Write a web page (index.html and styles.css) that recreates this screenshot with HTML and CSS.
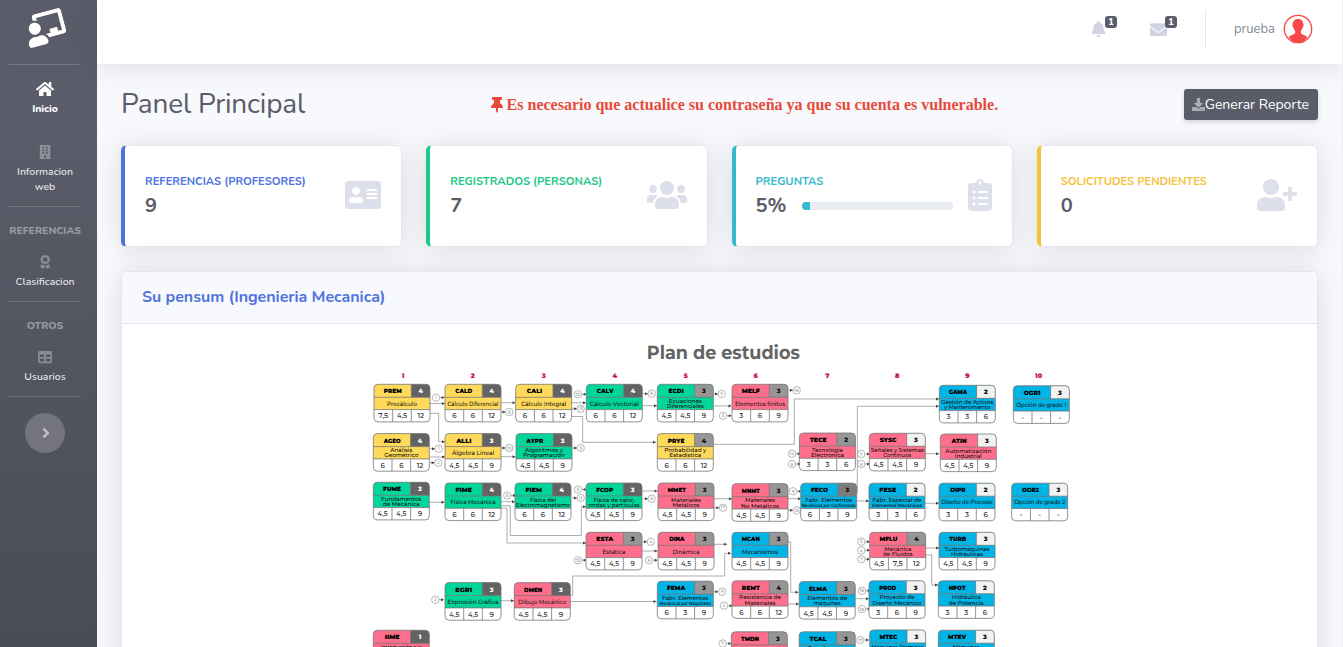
FILE: index.html
```html
<!DOCTYPE html>
<html lang="es">
<head>
<meta charset="utf-8">
<title>Panel Principal</title>
<link rel="stylesheet" href="styles.css">
</head>
<body>
<div class="wrapper">
  <nav class="sidebar">
    <a class="brand">
      <svg class="brand-icon" viewBox="0 0 640 512"><path d="M208 352c-2.39 0-4.78.35-7.06 1.09C187.98 357.3 174.35 360 160 360c-14.35 0-27.98-2.7-40.95-6.91-2.28-.74-4.66-1.09-7.05-1.09C49.94 352-.33 402.48 0 464.62.14 490.88 21.73 512 48 512h224c26.27 0 47.86-21.12 48-47.38.33-62.14-49.94-112.62-112-112.62zm-48-32c53.02 0 96-42.98 96-96s-42.98-96-96-96-96 42.98-96 96 42.98 96 96 96zM592 0H208c-26.47 0-48 22.25-48 49.59V96c23.42 0 45.1 6.78 64 17.8V64h352v288h-64v-64H384v64h-76.24c19.1 16.69 33.12 38.73 39.69 64H592c26.47 0 48-22.25 48-49.59V49.59C640 22.25 618.47 0 592 0z"/></svg>
    </a>
    <hr class="divider">
    <a class="nav-link active">
      <svg class="nav-icon" viewBox="0 0 576 512"><path d="M280.37 148.26L96 300.11V464a16 16 0 0 0 16 16l112.06-.29a16 16 0 0 0 15.92-16V368a16 16 0 0 1 16-16h64a16 16 0 0 1 16 16v95.64a16 16 0 0 0 16 16.05L464 480a16 16 0 0 0 16-16V300L295.67 148.26a12.19 12.19 0 0 0-15.3 0zM571.6 251.47L488 182.56V44.05a12 12 0 0 0-12-12h-56a12 12 0 0 0-12 12v72.61L318.47 43a48 48 0 0 0-61 0L4.34 251.47a12 12 0 0 0-1.6 16.9l25.5 31A12 12 0 0 0 45.15 301l235.22-193.74a12.19 12.19 0 0 1 15.3 0L530.9 301a12 12 0 0 0 16.9-1.6l25.5-31a12 12 0 0 0-1.7-16.93z"/></svg>
      <span>Inicio</span>
    </a>
    <a class="nav-link">
      <svg class="nav-icon" viewBox="0 0 448 512"><path fill-rule="evenodd" d="M436 480h-20V24c0-13-11-24-24-24H56C43 0 32 11 32 24v456H12c-7 0-12 5-12 12v20h448v-20c0-7-5-12-12-12zM128 64h64v64h-64zM256 64h64v64h-64zM128 160h64v64h-64zM256 160h64v64h-64zM128 256h64v64h-64zM256 256h64v64h-64zM192 384h64v96h-64z"/></svg>
      <span>Informacion<br>web</span>
    </a>
    <hr class="divider">
    <div class="heading">REFERENCIAS</div>
    <a class="nav-link grouped">
      <svg class="nav-icon" viewBox="0 0 384 512"><path fill-rule="evenodd" d="M192 0l42 20 46-2 26 38 42 22 2 47 24 41-22 42-2 47-41 24-26 39-47-3-44 22-42-22-47 2-26-38-41-23-2-47-23-43 24-41 1-47 42-22 26-38 46 2zM192 80a88 88 0 1 0 0 176a88 88 0 1 0 0-176z"/><path d="M67 325l28 39 50-2 47 24-45 116c-4 11-16 13-24 5l-41-44-60 3c-11 0-19-10-15-21zM317 325l-28 39-50-2-33 17 36 123c4 11 16 13 24 5l36-44 60 3c11 0 19-10 15-21z"/></svg>
      <span>Clasificacion</span>
    </a>
    <hr class="divider">
    <div class="heading">OTROS</div>
    <a class="nav-link grouped">
      <svg class="nav-icon" viewBox="0 0 512 512"><path d="M464 32H48C21.49 32 0 53.49 0 80v352c0 26.51 21.49 48 48 48h416c26.51 0 48-21.49 48-48V80c0-26.51-21.49-48-48-48zM224 416H64v-96h160v96zm0-160H64v-96h160v96zm224 160H288v-96h160v96zm0-160H288v-96h160v96z"/></svg>
      <span>Usuarios</span>
    </a>
    <hr class="divider">
    <button class="toggle"><svg viewBox="0 0 256 512"><path d="M224.3 273l-136 136c-9.4 9.4-24.6 9.4-33.9 0l-22.6-22.6c-9.4-9.4-9.4-24.6 0-33.9l96.4-96.4-96.4-96.4c-9.4-9.4-9.4-24.6 0-33.9L54.3 103c9.4-9.4 24.6-9.4 33.9 0l136 136c9.5 9.4 9.5 24.6.1 34z"/></svg></button>
  </nav>

  <div class="content">
    <header class="topbar">
      <a class="alert-link">
        <svg class="bell" viewBox="0 0 448 512"><path d="M224 512c35.32 0 63.97-28.65 63.97-64H160.03c0 35.35 28.65 64 63.97 64zm215.39-149.71c-19.32-20.76-55.47-51.99-55.47-154.29 0-77.7-54.48-139.9-127.94-155.16V32c0-17.67-14.32-32-31.98-32s-31.98 14.33-31.98 32v20.84C118.56 68.1 64.08 130.3 64.08 208c0 102.3-36.15 133.53-55.47 154.29-6 6.45-8.66 14.16-8.61 21.71.11 16.4 12.98 32 32.1 32h383.8c19.12 0 32-15.6 32.1-32 .05-7.55-2.61-15.27-8.61-21.71z"/></svg>
        <span class="badge">1</span>
      </a>
      <a class="alert-link">
        <svg class="envelope" viewBox="0 0 512 512"><path d="M502.3 190.8c3.9-3.1 9.7-.2 9.7 4.7V400c0 26.5-21.5 48-48 48H48c-26.5 0-48-21.5-48-48V195.6c0-5 5.7-7.8 9.7-4.7 22.4 17.4 52.1 39.5 154.1 113.6 21.1 15.4 56.7 47.8 92.2 47.6 35.7.3 72-32.8 92.3-47.6 102-74.1 131.6-96.3 154-113.7zM256 320c23.2.4 56.6-29.2 73.4-41.4 132.7-96.3 142.8-104.7 173.4-128.7 5.8-4.5 9.2-11.5 9.2-18.9v-19c0-26.5-21.5-48-48-48H48c-26.5 0-48 21.5-48 48v19c0 7.4 3.4 14.3 9.2 18.9 30.6 23.9 40.7 32.4 173.4 128.7 16.8 12.2 50.2 41.8 73.4 41.4z"/></svg>
        <span class="badge">1</span>
      </a>
      <span class="topbar-divider"></span>
      <span class="user">prueba</span>
      <svg class="avatar" viewBox="0 0 30 30"><circle cx="15" cy="15" r="13.7"/><path d="M15 5c3.6 0 5.3 2.2 5.2 5.3.7.2.5 2.4-.6 3.2-.4 1.7-1 2.5-1.700 3.200v2.500c1.500 1.500 4.700 1.800 6.600 4C22 26.500 19 28.500 15 28.500S8 26.500 5.500 23.200c1.900-2.200 5.100-2.500 6.600-4v-2.500c-.7-.7-1.300-1.500-1.700-3.200-1.100-.8-1.300-3-.6-3.200C9.700 7.200 11.400 5 15 5z"/></svg>
    </header>

    <main class="container">
      <div class="page-head">
        <h1>Panel Principal</h1>
        <div class="warning">
          <svg viewBox="0 0 384 512"><path d="M298.028 214.267L285.793 96H328c13.255 0 24-10.745 24-24V24c0-13.255-10.745-24-24-24H56C42.745 0 32 10.745 32 24v48c0 13.255 10.745 24 24 24h42.207L85.972 214.267C37.465 236.82 0 277.261 0 328c0 13.255 10.745 24 24 24h136v104.007c0 1.242.289 2.467.845 3.578l24 48c2.941 5.882 11.364 5.893 14.311 0l24-48a8.008 8.008 0 0 0 .845-3.578V352h136c13.255 0 24-10.745 24-24-.001-51.183-37.983-91.42-85.973-113.733z"/></svg>
          <span>Es necesario que actualice su contraseña ya que su cuenta es vulnerable.</span>
        </div>
        <button class="report"><svg viewBox="0 0 512 512"><path d="M216 0h80c13.3 0 24 10.7 24 24v168h87.7c17.8 0 26.7 21.5 14.1 34.1L269.7 378.3c-7.5 7.5-19.8 7.5-27.3 0L90.1 226.1c-12.6-12.6-3.7-34.1 14.1-34.1H192V24c0-13.3 10.7-24 24-24zm296 376v112c0 13.3-10.7 24-24 24H24c-13.3 0-24-10.7-24-24V376c0-13.3 10.7-24 24-24h146.7l49 49c20.1 20.1 52.5 20.1 72.6 0l49-49H488c13.3 0 24 10.7 24 24zm-124 88c0-11-9-20-20-20s-20 9-20 20 9 20 20 20 20-9 20-20zm64 0c0-11-9-20-20-20s-20 9-20 20 9 20 20 20 20-9 20-20z"/></svg><span>Generar Reporte</span></button>
      </div>

      <section class="stats">
        <article class="stat primary">
          <div class="stat-text"><div class="label">REFERENCIAS (PROFESORES)</div><div class="value">9</div></div>
          <svg viewBox="0 0 576 512"><path fill-rule="evenodd" d="M528 32H48C21.5 32 0 53.5 0 80v352c0 26.5 21.5 48 48 48h480c26.5 0 48-21.5 48-48V80c0-26.5-21.5-48-48-48zm-352 96c35.3 0 64 28.7 64 64s-28.7 64-64 64-64-28.7-64-64 28.7-64 64-64zm112 236.8c0 10.6-10 19.2-22.4 19.2H86.4C74 384 64 375.4 64 364.8v-19.2c0-31.8 30.1-57.6 67.2-57.6h5c12.3 5.1 25.7 8 39.8 8s27.6-2.9 39.8-8h5c37.1 0 67.2 25.8 67.2 57.6zM352 160h160v32H352zM352 224h160v32H352zM352 288h160v32H352z"/></svg>
        </article>
        <article class="stat success">
          <div class="stat-text"><div class="label">REGISTRADOS (PERSONAS)</div><div class="value">7</div></div>
          <svg viewBox="0 0 640 512"><path d="M96 224c35.3 0 64-28.7 64-64s-28.7-64-64-64-64 28.7-64 64 28.7 64 64 64zm448 0c35.3 0 64-28.7 64-64s-28.7-64-64-64-64 28.7-64 64 28.7 64 64 64zm32 32h-64c-17.6 0-33.5 7.1-45.1 18.6 40.3 22.1 68.9 62 75.1 109.4h66c17.7 0 32-14.3 32-32v-32c0-35.3-28.7-64-64-64zm-256 0c61.9 0 112-50.1 112-112S381.9 32 320 32 208 82.1 208 144s50.1 112 112 112zm76.8 32h-8.3c-20.8 10-43.9 16-68.5 16s-47.6-6-68.5-16h-8.3C179.6 288 128 339.6 128 403.2V432c0 26.5 21.5 48 48 48h288c26.5 0 48-21.5 48-48v-28.8c0-63.6-51.6-115.2-115.2-115.2zm-223.7-13.4C161.5 263.1 145.6 256 128 256H64c-35.3 0-64 28.7-64 64v32c0 17.7 14.3 32 32 32h65.9c6.3-47.4 34.9-87.3 75.2-109.4z"/></svg>
        </article>
        <article class="stat info">
          <div class="stat-text"><div class="label">PREGUNTAS</div><div class="value-row"><div class="value">5%</div><div class="progress"><div class="bar" style="width:5%"></div></div></div></div>
          <svg viewBox="0 0 384 512"><path d="M336 64h-80c0-35.3-28.7-64-64-64s-64 28.7-64 64H48C21.5 64 0 85.5 0 112v352c0 26.5 21.5 48 48 48h288c26.5 0 48-21.5 48-48V112c0-26.5-21.5-48-48-48zM96 424c-13.3 0-24-10.7-24-24s10.7-24 24-24 24 10.7 24 24-10.7 24-24 24zm0-96c-13.3 0-24-10.7-24-24s10.7-24 24-24 24 10.7 24 24-10.7 24-24 24zm0-96c-13.3 0-24-10.7-24-24s10.7-24 24-24 24 10.7 24 24-10.7 24-24 24zm96-192c13.3 0 24 10.7 24 24s-10.7 24-24 24-24-10.7-24-24 10.7-24 24-24zm128 368c0 4.4-3.6 8-8 8H168c-4.4 0-8-3.6-8-8v-16c0-4.4 3.6-8 8-8h144c4.4 0 8 3.6 8 8v16zm0-96c0 4.4-3.6 8-8 8H168c-4.4 0-8-3.6-8-8v-16c0-4.4 3.6-8 8-8h144c4.4 0 8 3.6 8 8v16zm0-96c0 4.4-3.6 8-8 8H168c-4.4 0-8-3.6-8-8v-16c0-4.4 3.6-8 8-8h144c4.4 0 8 3.6 8 8v16z"/></svg>
        </article>
        <article class="stat pending">
          <div class="stat-text"><div class="label">SOLICITUDES PENDIENTES</div><div class="value">0</div></div>
          <svg viewBox="0 0 640 512"><path d="M624 208h-64v-64c0-8.8-7.2-16-16-16h-32c-8.8 0-16 7.2-16 16v64h-64c-8.8 0-16 7.2-16 16v32c0 8.8 7.2 16 16 16h64v64c0 8.8 7.2 16 16 16h32c8.8 0 16-7.2 16-16v-64h64c8.8 0 16-7.2 16-16v-32c0-8.8-7.2-16-16-16zm-400 48c70.7 0 128-57.3 128-128S294.7 0 224 0 96 57.3 96 128s57.3 128 128 128zm89.6 32h-16.7c-22.2 10.2-46.9 16-72.9 16s-50.6-5.8-72.9-16h-16.7C60.2 288 0 348.2 0 422.4V464c0 26.5 21.5 48 48 48h352c26.5 0 48-21.5 48-48v-41.6c0-74.2-60.2-134.4-134.4-134.4z"/></svg>
        </article>
      </section>

      <section class="pensum">
        <h2><span>Su pensum (Ingenieria Mecanica)</span></h2>
        <div class="pensum-body"><svg id="plan" viewBox="365 340 710 330" width="710" height="330"></svg></div>
      </section>
    </main>
  </div>
</div>
<script src="plan.js"></script>
</body>
</html>
```
FILE: styles.css
```css
* { box-sizing: border-box; }
body { margin: 0; background: #f8f9fc; color: #5a5c69; font-family: Nunito, Lato, sans-serif; font-size: 16px; }
svg { fill: currentColor; flex: none; }
button { font: inherit; border: 0; }
.wrapper { display: flex; height: 647px; overflow: hidden; border-right: 1px solid #eeeff3; }

.sidebar { width: 97px; height: 1250px; flex: none; padding-right: 7px; display: flex; flex-direction: column; background: linear-gradient(180deg, #5a5c69 10%, #373840 100%); color: rgba(255,255,255,.85); }
.brand { height: 64px; flex: none; display: flex; align-items: center; justify-content: center; color: #fff; padding: 0 0 8px 2px; }
.brand-icon { width: 40px; height: 32px; margin-left: -3px; transform: rotate(-15deg); }
.divider { width: 72px; height: 1px; border: 0; margin: 0 auto; background: rgba(255,255,255,.17); flex: none; }
.nav-link { display: flex; flex-direction: column; align-items: center; text-align: center; font-size: 10.4px; line-height: 15px; padding-top: 17px; height: 63px; font-weight: 600; letter-spacing: 0; flex: none; }
.nav-link + .nav-link { height: 78px; }
.nav-link.active { color: #fff; font-weight: 800; padding-top: 16px; letter-spacing: -.05px; }
.nav-link.grouped { height: 60px; padding-top: 14px; }
.nav-icon { height: 14px; margin-bottom: 5px; color: rgba(255,255,255,.32); }
.active .nav-icon { color: #fff; height: 16px; margin-bottom: 4px; }
.heading { height: 34px; padding-top: 16px; line-height: 16px; text-align: center; color: rgba(255,255,255,.42); font-size: 10.4px; font-weight: 800; flex: none; }
.toggle { width: 40px; height: 40px; border-radius: 50%; margin: 16px auto 0; padding: 0; display: flex; align-items: center; justify-content: center; background: rgba(255,255,255,.2); color: rgba(255,255,255,.55); flex: none; }
.toggle svg { height: 16px; margin-left: 2px; }

.content { flex: 1; min-width: 0; }
.topbar { height: 64px; background: #fff; box-shadow: 0 2px 28px rgba(58,59,69,.15); display: flex; align-items: center; justify-content: flex-end; padding: 0 29px 6px 0; color: #d1d3e2; }
.alert-link { position: relative; display: flex; align-items: center; width: 60px; height: 40px; }
.bell { width: 15px; height: 16px; }
.envelope { width: 17px; height: 17px; margin-left: -1px; }
.badge { position: absolute; left: 14px; top: 7px; width: 12px; height: 12px; border-radius: 3px; background: #5a5c69; color: #fff; font-size: 9px; line-height: 12px; font-weight: 800; text-align: center; }
.topbar-divider { width: 1px; height: 38px; background: #e3e6f0; margin: 0 28px 0 -6px; }
.user { color: #858796; font-size: 13px; line-height: 18px; width: 49px; padding-bottom: 1px; }
.avatar { width: 30px; height: 30px; color: #f94848; }
.avatar circle { fill: none; stroke: currentColor; stroke-width: 1.3; }

.container { padding: 24px 24px 0; }
.page-head { display: flex; justify-content: space-between; align-items: center; height: 33px; margin-bottom: 24px; }
h1 { margin: 0; width: 184px; font-size: 28px; line-height: 33px; font-weight: 400; letter-spacing: -.2px; white-space: nowrap; }
.warning { display: flex; align-items: center; gap: 4px; color: #e74a3b; font: bold 16px/24px "Liberation Serif", serif; }
.warning svg { height: 16px; width: 12px; }
.report { height: 31px; background: #5a5c69; color: #fff; border-radius: 3px; display: flex; align-items: center; padding: 0 9px 0 8px; box-shadow: 0 2px 4px rgba(58,59,69,.2); white-space: nowrap; font-size: 14px; }
.report svg { width: 13px; height: 13px; color: rgba(255,255,255,.5); }

.stats { display: grid; grid-template-columns: repeat(4, 1fr); gap: 24px; margin-bottom: 24px; }
.stat { height: 102px; background: #fff; border: 1px solid #e3e6f0; border-left: 4px solid; border-radius: 5.6px; box-shadow: 0 2px 28px rgba(58,59,69,.15); padding: 0 20px 2px; display: flex; align-items: center; gap: 15px; }
.stat-text { flex: 1; min-width: 0; }
.stat svg { height: 32px; color: #dddfeb; }
.label { font-size: 11.2px; font-weight: 700; line-height: 17px; margin-bottom: 4px; white-space: nowrap; }
.value { color: #5a5c69; font-size: 20px; line-height: 24px; font-weight: 700; }
.value-row { display: flex; align-items: center; gap: 16px; }
.progress { flex: 1; height: 8px; border-radius: 5px; overflow: hidden; background: #eaecf4; }
.bar { height: 100%; background: currentColor; }
.primary { border-left-color: #4e73df; color: #4e73df; }
.success { border-left-color: #1cc88a; color: #1cc88a; }
.info { border-left-color: #36b9cc; color: #36b9cc; }
.pending { border-left-color: #f6c23e; color: #f6c23e; }

.pensum { height: 1000px; background: #fff; border: 1px solid #e3e6f0; border-radius: 5.6px; box-shadow: 0 2px 28px rgba(58,59,69,.15); }
h2 { margin: 0; height: 52px; padding: 0 20px; border-bottom: 1px solid #e3e6f0; background: #f8f9fc; border-radius: 5px 5px 0 0; color: #4e73df; font-size: 16px; line-height: 50px; font-weight: 700; letter-spacing: -.03px; }
.pensum-body { display: flex; justify-content: center; padding-top: 16px; }

#plan { font-family: Montserrat, Nunito, "Open Sans", sans-serif; text-rendering: geometricPrecision; }
#plan text { text-anchor: middle; fill: #111; }
#plan .plan-title { font-size: 19px; font-weight: 700; fill: #646464; }
#plan .sem { font-size: 6.5px; font-weight: 900; fill: #c8143c; }
#plan .code { font-size: 6px; font-weight: 900; fill: #000; }
#plan .cred { font-size: 6.2px; font-weight: 900; }
#plan .hours { font-size: 7px; font-weight: 500; fill: #222; }
#plan .name { font-size: 5.8px; font-weight: 500; }
#plan .name.single { font-size: 6.2px; }
#plan .name.small { font-size: 4.6px; font-weight: 600; }
#plan .ref { font-size: 4.5px; fill: #666; }
#plan .bubble { fill: #fff; stroke: #888; stroke-width: .6; }
#plan .edge { fill: none; stroke: #8a8a8a; stroke-width: .7; }
#plan .tip { fill: #444; }
#plan .line { fill: none; stroke: #777; stroke-width: .8; }
```
FILE: plan.js
```js
const Y = '#ffd95a', G = '#00d69b', R = '#ff6f8b', B = '#00b4e6';
const D = '#636363', M = '#969696', L = '#f2f2f2';

// x, y, code, credits, fill, credit fill, hours, then name lines as [text, width, small?]
const courses = [
  [374,384.3,'PREM',4,Y,D,'7,5 4,5 12',['Precálculo',30]],
  [445,384.3,'CALD',4,Y,D,'6 6 12',['Cálculo Diferencial',51]],
  [515.7,384.3,'CALI',4,Y,D,'6 6 12',['Cálculo Integral',45]],
  [586.3,384.3,'CALV',4,G,D,'6 6 12',['Cálculo Vectorial',49]],
  [657.3,384.3,'ECDI',3,G,M,'4,5 4,5 9',['Ecuaciones',33],['Diferenciales',37]],
  [732,384.3,'MELF',3,R,M,'3 6 9',['Elementos finitos',50]],
  [939.3,385.3,'GAMA',2,B,L,'3 3 6',['Gestión de Activos',52],['y Mantenimiento',46]],
  [1013.3,385.8,'OGR1',3,B,L,'- - -',['Opción de grado 1',50]],
  [373.3,433.6,'AGEO',4,Y,D,'6 6 12',['Análisis',22],['Geométrico',34]],
  [445,433.6,'ALLI',3,Y,D,'4,5 4,5 9',['Álgebra Lineal',42]],
  [516,433.6,'AYPR',3,G,D,'4,5 4,5 9',['Algoritmos y',38],['Programación',42]],
  [657.3,433.6,'PRYE',4,Y,M,'6 6 12',['Probabilidad y',42],['Estadística',32]],
  [799.4,433,'TECE',2,R,M,'3 3 6',['Tecnología',31],['Electrónica',33]],
  [869.3,433.3,'SYSC',3,R,L,'4,5 4,5 9',['Señales y Sistemas',53],['Continuos',28]],
  [940.3,434,'ATIN',3,R,L,'4,5 4,5 9',['Automatización',46],['Industrial',27]],
  [373.3,482.3,'FUME',3,G,D,'4,5 4,5 9',['Fundamentos',40],['de Mecánica',37]],
  [445,483,'FIME',4,G,D,'6 6 12',['Física Mecánica',45]],
  [515,483,'FIEM',4,G,D,'6 6 12',['Física del',26],['Electromagnetismo',54]],
  [586,483,'FCOP',3,G,D,'4,5 4,5 9',['Física de calor,',41],['ondas y partículas',51]],
  [658,483,'MMET',3,R,M,'4,5 4,5 9',['Materiales',30],['Metálicos',27]],
  [732,483.7,'MNMT',3,R,M,'4,5 4,5 9',['Materiales',30],['No Metálicos',38]],
  [800.7,483.2,'FECO',3,B,'#7d7d7d','6 3 9',['Fabr. Elementos',47],['Mecánicos por Conformado',54,true]],
  [869,483.2,'FESE',2,B,L,'3 3 6',['Fabr. Especial de',49],['Elementos Mecánicos',50,true]],
  [939,483.2,'DIPR',2,B,L,'3 3 6',['Diseño de Proceso',51]],
  [1011.7,483.2,'OGR2',3,B,L,'- - -',['Opción de grado 2',51]],
  [586,532.3,'ESTA',3,R,M,'4,5 4,5 9',['Estática',23]],
  [658,532.3,'DINA',3,R,M,'4,5 4,5 9',['Dinámica',27]],
  [732,532.3,'MCAN',3,B,M,'4,5 4,5 9',['Mecanismos',36]],
  [869.7,532.3,'MFLU',4,R,M,'4,5 7,5 12',['Mecánica',27],['de Fluidos',30]],
  [939,532.3,'TURB',3,B,L,'4,5 4,5 9',['Turbomáquinas',45],['Hidráulicas',32]],
  [445,582.6,'EGR1',3,G,D,'4,5 4,5 9',['Expresión Gráfica',51]],
  [514.3,582.6,'DMEN',3,R,D,'4,5 4,5 9',['Dibujo Mecánico',48]],
  [657.3,581.2,'FEMA',3,B,M,'6 3 9',['Fabr. Elementos',46],['Mecánicos por Maquinado',51,true]],
  [732,580.8,'REMT',4,R,M,'6 6 12',['Resistencia de',42],['Materiales',31]],
  [799.2,581.5,'ELMA',3,B,M,'4,5 4,5 9',['Elementos de',40],['máquinas',27]],
  [869,580.8,'PROD',3,B,L,'3 6 9',['Proyecto de',35],['Diseño Mecánico',49]],
  [938.3,580.8,'HPOT',2,B,L,'3 3 6',['Hidráulica',29],['de Potencia',35]],
  [373.3,630.3,'IIME',1,R,D,'',['Introducción a la',41],['Ingeniería',30]],
  [731.3,631.8,'TMDN',3,R,M,'',['Termodinámica',42]],
  [799.2,631.8,'TCAL',3,B,M,'',['Transferencia',38],['de Calor',26]],
  [869.7,629.9,'MTEC',3,B,L,'',['Máquinas Térmicas',52],['y Fluidos',28]],
  [938.3,630.2,'MTEV',3,B,L,'',['Máquinas',27],['Eléctricas',30]],
];

const edges = [
  '430,403.5 445,403.5','501,402.7 515.5,402.7','572,402.7 586,402.7','643,405.7 657,405.7','714,405.9 731.5,405.9',
  '430,413.3 438.7,413.3 438.7,441.7 445,441.7','430,457 445,457','501,456.7 515.5,456.7',
  '572,416.5 582.7,416.5 582.7,442.3 656,442.3','713,444.3 794.3,444.3 794.3,399 939,399',
  '857.3,493 857.3,406.3 939,406.3','925.5,453.7 939,453.7','430,502.3 444.5,502.3','501,501.7 515,501.7',
  '501,505.7 510.3,505.7 510.3,535.5 581.3,535.5 581.3,506.7 586,506.7',
  '501,508 507,508 507,543 586,543','642,491 657.5,491','714,498.7 732,498.7','788,498.7 801,498.7',
  '857,501 869,501','925,503.3 939,503.3','642,551 657.5,551','714,544.3 727,544.3',
  '501,600.7 514,600.7','570.5,601.5 656.5,601.5',
  '570.5,595.3 572.7,595.3 572.7,576 724.7,576 724.7,553.3 731,553.3',
  '788,542 790.7,542 790.7,592.3 798.5,592.3','788,604 799,604','855,598.7 869,598.7',
  '925,548 939,548','925,555 931.7,555 931.7,585 938,585',
];

// number, x, y; bubbles in "incoming" point at the course on their right
const incoming = [[1,436,397.6],[10,578,394.3],[3,723,415.7],[14,792,453.7],[8,792,464],[7,861.3,454],[8,861.3,464],
  [5,507.3,495.5],[5,578,489.5],[13,578,560.3],[6,649,560.3],[2,435.3,599.7],[4,724,605.7],[7,722.7,643.5],[9,793,491.3],
  [3,861.3,541.7],[4,861.3,550.3],[7,861.3,559.3],[18,862,590.7],[18,862,609],[17,860.3,640]];
const outgoing = [[5,509.3,412],[13,580.7,408.7],[1,438.7,448.7],[2,438.3,462.7],[10,509.3,448],[3,580.7,448],
  [6,651.7,393.7],[7,721.7,394],[16,796.7,390.3],[11,580.7,498],[8,651.7,498.7],[17,723,507.7],[4,650.7,541.7],
  [9,722,591.7],[15,796.7,510.3]];

const text = (x, y, cls, s, w, extra = '') =>
  `<text x="${x}" y="${y}" class="${cls}"${w ? ` textLength="${w}" lengthAdjust="spacingAndGlyphs"` : ''} ${extra}>${s}</text>`;
const tip = (x, y) => `<path class="tip" d="M${x} ${y}l-3 -1.5v3z"/>`;

let out = text(723.3, 359, 'plan-title', 'Plan de estudios', 153);
[403, 472.7, 543.7, 614.7, 685.7, 755.7, 827.3, 897.3, 967.3, 1038.7].forEach((x, i) => {
  out += text(x, 377.5, 'sem', i + 1);
});
edges.forEach(e => {
  const [x, y] = e.split(' ').pop().split(',').map(Number);
  out += `<polyline class="edge" points="${e}"/>` + tip(x, y);
});
const bubble = (n, x, y) => `<circle class="bubble" cx="${x}" cy="${y}" r="3.7"/>` + text(x, y + 1.6, 'ref', n);
incoming.forEach(([n, x, y]) => {
  out += `<path class="edge" d="M${x + 3.7} ${y}h4.5"/>` + tip(x + 8.7, y) + bubble(n, x, y);
});
outgoing.forEach(([n, x, y]) => {
  out += `<path class="edge" d="M${x - 8.5} ${y}h5"/>` + tip(x - 3.7, y) + bubble(n, x, y);
});
courses.forEach(([x, y, code, cred, fill, cfill, hours, ...names]) => {
  const w = 56, h = 37.6, a = 13, b = 25.3, c = 37.3;
  out += `<g transform="translate(${x} ${y})">
    <rect width="${w}" height="${h}" rx="4" fill="#fff"/>
    <path fill="${fill}" d="M0 ${b}V4a4 4 0 0 1 4-4H${w - 4}a4 4 0 0 1 4 4V${b}z"/>
    <path fill="${cfill}" d="M${c} 0H${w - 4}a4 4 0 0 1 4 4V${a}H${c}z"/>
    <path class="line" d="M0 ${a}H${w}M0 ${b}H${w}M${c} 0V${a}M18.7 ${b}V${h}M${c} ${b}V${h}"/>
    <rect class="line" width="${w}" height="${h}" rx="4"/>`;
  const codeWidth = code.length * 4.3 + (/M/.test(code) ? .8 : -.3) - (code.match(/I/g) || []).length * 1.6;
  out += text(18.8, 9, 'code', code, codeWidth);
  out += text(46.7, 9, 'cred', cred, 0, cfill === D ? 'style="fill:#fff"' : '');
  names.forEach(([s, nw, small], i) => {
    const single = names.length === 1;
    const ny = single ? 21.3 : 18.7 + i * 5.2;
    out += text(28, ny, 'name' + (single ? ' single' : '') + (small ? ' small' : ''), s, nw);
  });
  if (hours) hours.split(' ').forEach((v, i) => { out += text([9.3, 28, 46.7][i], 34.1, 'hours', v, v.length === 3 ? 10 : 0); });
  out += '</g>';
});
document.getElementById('plan').innerHTML = out;
```
